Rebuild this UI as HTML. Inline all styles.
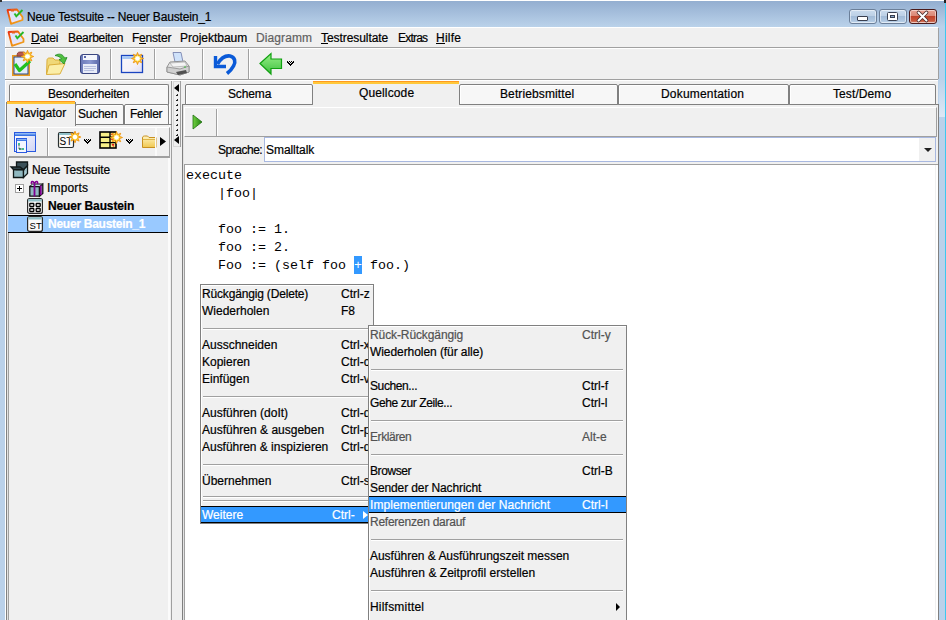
<!DOCTYPE html><html><head><meta charset="utf-8"><style>
html,body{margin:0;padding:0;}
body{width:946px;height:620px;position:relative;overflow:hidden;background:#bad1ea;font-family:'Liberation Sans',sans-serif;}
div{position:absolute;white-space:pre;box-sizing:border-box;}
svg{position:absolute;overflow:visible;}
u{text-decoration:none;border-bottom:1px solid currentColor;}
.t{-webkit-text-stroke:0.2px currentColor;}
</style></head><body>
<div style="left:0px;top:0px;width:946px;height:1px;background:#ffffff"></div>
<div style="left:0px;top:1px;width:946px;height:26px;background:linear-gradient(#93aed0,#bad2ea)"></div>
<div style="left:0px;top:27px;width:946px;height:593px;background:#bad1ea"></div>
<div style="left:939px;top:80px;width:6px;height:37px;background:linear-gradient(#bcd3ea,#dce8f5)"></div>
<div style="left:945px;top:0px;width:1px;height:620px;background:#3cc8f0"></div>
<div style="left:0px;top:0px;width:2px;height:2px;background:#333"></div>
<div style="left:944px;top:0px;width:2px;height:3px;background:#222"></div>
<div style="left:5px;top:27px;width:933px;height:593px;background:#f0f0f0;border-top:1px solid #fff;border-left:1px solid #fff"></div>
<div style="left:938px;top:28px;width:1px;height:19px;background:#a0a0a0"></div>
<div style="left:938px;top:49px;width:1px;height:30px;background:#a0a0a0"></div>
<div style="left:938px;top:104px;width:1px;height:516px;background:#a0a0a0"></div>
<div class="t" style="left:27px;top:11px;font-family:'Liberation Sans',sans-serif;font-size:12px;line-height:12px;color:#000;letter-spacing:-0.168px;">Neue Testsuite -- Neuer Baustein_1</div>
<div style="left:849px;top:9px;width:28px;height:15px;background:linear-gradient(#cbdcee 0%,#bcd0e6 45%,#a3bcd8 50%,#b0c8e2 85%,#c8dcf0 100%);border:1px solid #6b7f99;border-radius:3px;box-shadow:inset 0 0 0 1px rgba(255,255,255,0.5)"></div>
<div style="left:879px;top:9px;width:28px;height:15px;background:linear-gradient(#cbdcee 0%,#bcd0e6 45%,#a3bcd8 50%,#b0c8e2 85%,#c8dcf0 100%);border:1px solid #6b7f99;border-radius:3px;box-shadow:inset 0 0 0 1px rgba(255,255,255,0.5)"></div>
<div style="left:909px;top:9px;width:28px;height:15px;background:linear-gradient(#e8a293 0%,#d98876 45%,#c0432a 50%,#c85a3f 85%,#e0a090 100%);border:1px solid #4a1a1a;border-radius:3px;box-shadow:inset 0 0 0 1px rgba(255,255,255,0.5)"></div>
<div style="left:857px;top:16px;width:11px;height:5px;background:#fff;border:1px solid #3a4050;border-radius:1px"></div>
<svg style="left:887px;top:12px" width="11" height="9" viewBox="0 0 11 9">
<rect x="0.5" y="0.5" width="10" height="8" rx="1" fill="#fff" stroke="#3a4050"/>
<rect x="3.5" y="3.5" width="4" height="2" fill="#8aa8cc" stroke="#3a4050"/></svg>
<svg style="left:916px;top:11px" width="13" height="11" viewBox="0 0 13 11">
<path d="M2.5 1.5 L10.5 9.5 M10.5 1.5 L2.5 9.5" stroke="#4a2a2a" stroke-width="3.6" stroke-linecap="round"/>
<path d="M2.5 1.5 L10.5 9.5 M10.5 1.5 L2.5 9.5" stroke="#ffffff" stroke-width="2" stroke-linecap="round"/></svg>
<svg style="left:4px;top:6px" width="22" height="22" viewBox="0 0 22 22">
<defs><linearGradient id="ao4" x1="0" y1="0" x2="1" y2="1"><stop offset="0" stop-color="#e83010"/><stop offset="0.5" stop-color="#f08a10"/><stop offset="1" stop-color="#f0a020"/></linearGradient></defs>
<path d="M3.5 4 L13 3.5 L18.5 11 L18.5 14 L7 17.8 Z" fill="#e8e4fa" stroke="url(#ao4)" stroke-width="1.8" stroke-linejoin="round"/>
<path d="M6 6 L12 5.5 L16.5 11.5 L8 14.5 Z" fill="#dfe4fb"/>
<rect x="7" y="3" width="3" height="2.5" fill="#e86020"/>
<path d="M10.5 7.5 L12.3 10.2 L18.5 4" stroke="#28b828" stroke-width="1.9" fill="none"/></svg>
<div style="left:5px;top:47px;width:933px;height:1px;background:#a0a0a0"></div>
<div style="left:5px;top:48px;width:933px;height:1px;background:#ffffff"></div>
<svg style="left:5px;top:28px" width="22" height="22" viewBox="0 0 22 22">
<defs><linearGradient id="ao5" x1="0" y1="0" x2="1" y2="1"><stop offset="0" stop-color="#e83010"/><stop offset="0.5" stop-color="#f08a10"/><stop offset="1" stop-color="#f0a020"/></linearGradient></defs>
<path d="M3.5 4 L13 3.5 L18.5 11 L18.5 14 L7 17.8 Z" fill="#e8e4fa" stroke="url(#ao5)" stroke-width="1.8" stroke-linejoin="round"/>
<path d="M6 6 L12 5.5 L16.5 11.5 L8 14.5 Z" fill="#dfe4fb"/>
<rect x="7" y="3" width="3" height="2.5" fill="#e86020"/>
<path d="M10.5 7.5 L12.3 10.2 L18.5 4" stroke="#28b828" stroke-width="1.9" fill="none"/></svg>
<div style="left:31.0px;top:43px;width:8.5px;height:1px;background:#000"></div>
<div class="t" style="left:31px;top:32px;font-family:'Liberation Sans',sans-serif;font-size:12px;line-height:12px;color:#000;letter-spacing:-0.163px;">Datei</div>
<div class="t" style="left:68px;top:32px;font-family:'Liberation Sans',sans-serif;font-size:12px;line-height:12px;color:#000;letter-spacing:-0.285px;">Bearbeiten</div>
<div style="left:139.1px;top:43px;width:6.5px;height:1px;background:#000"></div>
<div class="t" style="left:132px;top:32px;font-family:'Liberation Sans',sans-serif;font-size:12px;line-height:12px;color:#000;letter-spacing:-0.212px;">Fenster</div>
<div class="t" style="left:180px;top:32px;font-family:'Liberation Sans',sans-serif;font-size:12px;line-height:12px;color:#000;letter-spacing:-0.015px;">Projektbaum</div>
<div class="t" style="left:256px;top:32px;font-family:'Liberation Sans',sans-serif;font-size:12px;line-height:12px;color:#606060;letter-spacing:0.107px;">Diagramm</div>
<div style="left:321.0px;top:43px;width:7.3px;height:1px;background:#000"></div>
<div class="t" style="left:321px;top:32px;font-family:'Liberation Sans',sans-serif;font-size:12px;line-height:12px;color:#000;letter-spacing:-0.064px;">Testresultate</div>
<div class="t" style="left:398px;top:32px;font-family:'Liberation Sans',sans-serif;font-size:12px;line-height:12px;color:#000;letter-spacing:-0.801px;">Extras</div>
<div style="left:436.0px;top:43px;width:8.9px;height:1px;background:#000"></div>
<div class="t" style="left:436px;top:32px;font-family:'Liberation Sans',sans-serif;font-size:12px;line-height:12px;color:#000;letter-spacing:0.238px;">Hilfe</div>
<div style="left:5px;top:79px;width:933px;height:1px;background:#a0a0a0"></div>
<div style="left:5px;top:80px;width:933px;height:1px;background:#ffffff"></div>
<div style="left:110px;top:49px;width:1px;height:30px;background:#a0a0a0"></div>
<div style="left:111px;top:49px;width:1px;height:30px;background:#ffffff"></div>
<div style="left:154px;top:49px;width:1px;height:30px;background:#a0a0a0"></div>
<div style="left:155px;top:49px;width:1px;height:30px;background:#ffffff"></div>
<div style="left:202px;top:49px;width:1px;height:30px;background:#a0a0a0"></div>
<div style="left:203px;top:49px;width:1px;height:30px;background:#ffffff"></div>
<div style="left:248px;top:49px;width:1px;height:30px;background:#a0a0a0"></div>
<div style="left:249px;top:49px;width:1px;height:30px;background:#ffffff"></div>
<svg style="left:11px;top:50px" width="26" height="28" viewBox="0 0 26 28">
<rect x="1.5" y="5.5" width="17" height="20" fill="#f4a830" stroke="#e89820" stroke-width="1"/>
<rect x="3" y="7" width="14" height="17" fill="#e2ecfa" stroke="#2a4a8a" stroke-width="1"/>
<path d="M6 6 C6 3 7 2 9 2 L12 2 C14 2 15 3 15 6 Z" fill="#b85a50" stroke="#803830" stroke-width="0.8"/>
<path d="M4 14 L8.5 20.5 L19 11" stroke="#20c020" stroke-width="3.2" fill="none" stroke-linejoin="round"/>
<path d="M16.50 0.30 L17.69 3.64 L20.88 2.12 L19.36 5.31 L22.70 6.50 L19.36 7.69 L20.88 10.88 L17.69 9.36 L16.50 12.70 L15.31 9.36 L12.12 10.88 L13.64 7.69 L10.30 6.50 L13.64 5.31 L12.12 2.12 L15.31 3.64 Z" fill="#ffe040" stroke="#f09818" stroke-width="1"/><circle cx="16.5" cy="6.5" r="2.36" fill="#ffffff"/></svg>
<svg style="left:45px;top:52px" width="24" height="24" viewBox="0 0 24 24">
<path d="M2 8 C2 7 3 6 4 6 L8 6 L10 8 L15 8 L15 20 L1.5 22 Z" fill="#f0d878" stroke="#d8a830" stroke-width="0.9"/>
<path d="M4 13 L20 11.5 L15 22 L1.5 22.5 Z" fill="#fbeea8" stroke="#d8a830" stroke-width="0.9"/>
<path d="M10 3.5 C14 1 18 2 19.5 6 L22 5.5 L19 12 L14 7.5 L16.5 7 C15.5 5 13 4 10 3.5 Z" fill="#50c040" stroke="#208a20" stroke-width="0.8"/></svg>
<svg style="left:80px;top:54px" width="20" height="20" viewBox="0 0 20 20">
<defs><linearGradient id="fl" x1="0" x2="1"><stop offset="0" stop-color="#6a78b8"/><stop offset="0.5" stop-color="#8a98d0"/><stop offset="1" stop-color="#5a68a8"/></linearGradient></defs>
<rect x="0.5" y="0.5" width="19" height="19" rx="2.5" fill="url(#fl)" stroke="#3a4680"/>
<rect x="3" y="1" width="14" height="5" fill="#f4f6fc"/>
<rect x="4" y="2" width="2" height="2" fill="#5a68a8"/>
<rect x="3" y="10" width="14" height="9" fill="#e8ecf8"/>
<path d="M4 12.5 H16 M4 14.5 H16 M4 16.5 H14" stroke="#a8b4d8" stroke-width="0.8"/></svg>
<svg style="left:120px;top:52px" width="25" height="23" viewBox="0 0 25 23">
<defs><linearGradient id="wb" x1="0" y1="0" x2="1" y2="1"><stop offset="0" stop-color="#fcf8f8"/><stop offset="0.6" stop-color="#f4f0f8"/><stop offset="1" stop-color="#dcdcf4"/></linearGradient></defs>
<rect x="1.5" y="3.5" width="21" height="17" fill="url(#wb)" stroke="#1a44c0" stroke-width="1.3"/>
<rect x="2" y="4" width="20" height="3" fill="#a8c8f4"/>
<path d="M17.50 0.50 L18.65 3.73 L21.74 2.26 L20.27 5.35 L23.50 6.50 L20.27 7.65 L21.74 10.74 L18.65 9.27 L17.50 12.50 L16.35 9.27 L13.26 10.74 L14.73 7.65 L11.50 6.50 L14.73 5.35 L13.26 2.26 L16.35 3.73 Z" fill="#ffe040" stroke="#f09818" stroke-width="1"/><circle cx="17.5" cy="6.5" r="2.28" fill="#ffffff"/></svg>
<svg style="left:165px;top:51px" width="26" height="27" viewBox="0 0 26 27">
<path d="M8 1.5 L16 1.5 L18 11 L10 11 Z" fill="#cfe2fa" stroke="#7a86b0" stroke-width="0.9"/>
<path d="M2 16 L5 11 L20 10 L24 15 L24 21 L15 24 L2 21 Z" fill="#e4e4e4" stroke="#8a8a8a" stroke-width="0.9"/>
<path d="M5 12 L20 11 L22 15 L8 16 Z" fill="#f4f4f4" stroke="#a0a0a0" stroke-width="0.6"/>
<path d="M2 16 L15 18 L24 15 L24 21 L15 24 L2 21 Z" fill="#d0d0d0" stroke="#8a8a8a" stroke-width="0.8"/>
<path d="M11 21 L21 19 L22 22 L13 24 Z" fill="#505050"/>
<rect x="19" y="15.5" width="2" height="1" fill="#40c040"/></svg>
<svg style="left:212px;top:52px" width="26" height="24" viewBox="0 0 26 24">
<path d="M5.5 12 C9 6 14 3.5 18 4 C23 5 24 10 21.5 14 C20 17 17.5 19.5 15 21.5" stroke="#0a5ad8" stroke-width="3.6" fill="none" stroke-linecap="butt"/>
<path d="M3.5 4 L3.5 14.5 L14 14.5" stroke="#0a5ad8" stroke-width="3.4" fill="none" stroke-linejoin="miter"/></svg>
<svg style="left:259px;top:52px" width="26" height="24" viewBox="0 0 26 24">
<defs><linearGradient id="ga" x1="0" y1="0" x2="0" y2="1"><stop offset="0" stop-color="#98f088"/><stop offset="1" stop-color="#40c040"/></linearGradient></defs>
<path d="M1 11.5 L12 1.5 L12 7 L22.5 7 L22.5 16.5 L12 16.5 L12 22 Z" fill="url(#ga)" stroke="#10a010" stroke-width="1.2"/></svg>
<svg style="left:287px;top:61px" width="7" height="5" viewBox="0 0 7 5" shape-rendering="crispEdges">
<path d="M0 0h1v1h-1z M2 0h1v1h-1z M4 0h1v1h-1z M6 0h1v1h-1z M0 1h1v1h-1z M1 1h1v1h-1z M3 1h1v1h-1z M5 1h1v1h-1z M6 1h1v1h-1z M1 2h1v1h-1z M2 2h1v1h-1z M4 2h1v1h-1z M5 2h1v1h-1z M2 3h1v1h-1z M3 3h1v1h-1z M4 3h1v1h-1z M3 4h1v1h-1z" fill="#000"/></svg>
<div style="left:6px;top:104px;width:1px;height:516px;background:#808080"></div>
<div style="left:7px;top:104px;width:1px;height:516px;background:#e3e3e3"></div>
<div style="left:169px;top:104px;width:1px;height:516px;background:#ffffff"></div>
<div style="left:171px;top:81px;width:1px;height:539px;background:#a0a0a0"></div>
<div style="left:9px;top:84px;width:160px;height:21px;background:#f7f7f7;border:1px solid #808080;border-bottom:none;border-radius:2px 2px 0 0;box-shadow:inset 1px 1px 0 #fff"></div>
<div class="t" style="left:48px;top:88px;font-family:'Liberation Sans',sans-serif;font-size:12px;line-height:12px;color:#000;letter-spacing:-0.205px;">Besonderheiten</div>
<div style="left:75px;top:104px;width:49px;height:21px;background:#f7f7f7;border:1px solid #808080;border-radius:2px 2px 0 0;box-shadow:inset 1px 1px 0 #fff"></div>
<div style="left:124px;top:104px;width:45px;height:21px;background:#f7f7f7;border:1px solid #808080;border-radius:2px 2px 0 0;box-shadow:inset 1px 1px 0 #fff"></div>
<div style="left:75px;top:124px;width:97px;height:1px;background:#808080"></div>
<div style="left:6px;top:102px;width:70px;height:24px;background:#f0f0f0;border-left:1px solid #808080;border-right:1px solid #808080"></div>
<div style="left:7px;top:101px;width:68px;height:1px;background:#ff9a20"></div>
<div style="left:7px;top:102px;width:68px;height:2px;background:#ffc83a"></div>
<div class="t" style="left:15px;top:107px;font-family:'Liberation Sans',sans-serif;font-size:12px;line-height:12px;color:#000;letter-spacing:-0.018px;">Navigator</div>
<div class="t" style="left:78px;top:108px;font-family:'Liberation Sans',sans-serif;font-size:12px;line-height:12px;color:#000;letter-spacing:-0.250px;">Suchen</div>
<div class="t" style="left:130px;top:108px;font-family:'Liberation Sans',sans-serif;font-size:12px;line-height:12px;color:#000;letter-spacing:-0.303px;">Fehler</div>
<div style="left:8px;top:127px;width:162px;height:30px;background:#f0f0f0;border-top:1px solid #fff;border-left:1px solid #fff;border-right:1px solid #a0a0a0;border-bottom:1px solid #a0a0a0"></div>
<div style="left:47px;top:128px;width:1px;height:28px;background:#a0a0a0"></div>
<div style="left:48px;top:128px;width:1px;height:28px;background:#ffffff"></div>
<div style="left:156px;top:128px;width:1px;height:28px;background:#fafafa"></div>
<svg style="left:14px;top:132px" width="23" height="23" viewBox="0 0 23 23">
<defs><linearGradient id="wt" x1="0" y1="0" x2="0" y2="1"><stop offset="0" stop-color="#a8ccf8"/><stop offset="1" stop-color="#2060e0"/></linearGradient>
<linearGradient id="wbd" x1="0" y1="0" x2="1" y2="1"><stop offset="0" stop-color="#ffffff"/><stop offset="1" stop-color="#d0d4f4"/></linearGradient></defs>
<rect x="0.5" y="0.5" width="21" height="19" fill="url(#wbd)" stroke="#2a5ae0"/>
<rect x="1" y="1" width="20.5" height="3" fill="url(#wt)"/>
<rect x="2.5" y="6.5" width="10" height="14" fill="#f4f6ff" stroke="#2a5ae0"/>
<rect x="3" y="7" width="9.5" height="2" fill="url(#wt)"/>
<rect x="4" y="11" width="2" height="2" fill="#40c090"/><rect x="8" y="16" width="2" height="2" fill="#40c090"/><rect x="5" y="16" width="2" height="2" fill="#40c090"/>
<path d="M5 13 V17 M5.5 17 H8" stroke="#202020" stroke-width="0.8" stroke-dasharray="1 0.6" fill="none"/></svg>
<svg style="left:57px;top:131px" width="24" height="19" viewBox="0 0 24 19">
<rect x="1.5" y="1.5" width="15" height="15" rx="1.5" fill="#fafafa" stroke="#283030" stroke-width="1.2"/>
<rect x="2" y="2" width="14" height="2" fill="#90c0c8"/>
<text x="2.6" y="13.6" font-family="Liberation Sans" font-size="10" fill="#000">ST</text>
<path d="M18.00 0.20 L19.11 3.32 L22.10 1.90 L20.68 4.89 L23.80 6.00 L20.68 7.11 L22.10 10.10 L19.11 8.68 L18.00 11.80 L16.89 8.68 L13.90 10.10 L15.32 7.11 L12.20 6.00 L15.32 4.89 L13.90 1.90 L16.89 3.32 Z" fill="#ffe040" stroke="#f09818" stroke-width="1"/><circle cx="18" cy="6" r="2.20" fill="#ffffff"/></svg>
<svg style="left:84px;top:139px" width="7" height="5" viewBox="0 0 7 5" shape-rendering="crispEdges">
<path d="M0 0h1v1h-1z M2 0h1v1h-1z M4 0h1v1h-1z M6 0h1v1h-1z M0 1h1v1h-1z M1 1h1v1h-1z M3 1h1v1h-1z M5 1h1v1h-1z M6 1h1v1h-1z M1 2h1v1h-1z M2 2h1v1h-1z M4 2h1v1h-1z M5 2h1v1h-1z M2 3h1v1h-1z M3 3h1v1h-1z M4 3h1v1h-1z M3 4h1v1h-1z" fill="#000"/></svg>
<svg style="left:99px;top:131px" width="25" height="18" viewBox="0 0 25 18">
<rect x="1" y="1" width="16" height="16" fill="#f8f088" stroke="#000" stroke-width="1.6"/>
<path d="M1 6.3 H17 M1 11.6 H17 M11 1 V17" stroke="#000" stroke-width="1.4"/>
<path d="M13 13 L15 15.5 M13.5 15 L15 13" stroke="#e01010" stroke-width="1.2"/>
<path d="M12 3 L14 4 M12 8 L14 9" stroke="#e01010" stroke-width="1"/>
<path d="M17.50 0.50 L18.65 3.73 L21.74 2.26 L20.27 5.35 L23.50 6.50 L20.27 7.65 L21.74 10.74 L18.65 9.27 L17.50 12.50 L16.35 9.27 L13.26 10.74 L14.73 7.65 L11.50 6.50 L14.73 5.35 L13.26 2.26 L16.35 3.73 Z" fill="#ffe040" stroke="#f09818" stroke-width="1"/><circle cx="17.5" cy="6.5" r="2.28" fill="#ffffff"/></svg>
<svg style="left:126px;top:139px" width="7" height="5" viewBox="0 0 7 5" shape-rendering="crispEdges">
<path d="M0 0h1v1h-1z M2 0h1v1h-1z M4 0h1v1h-1z M6 0h1v1h-1z M0 1h1v1h-1z M1 1h1v1h-1z M3 1h1v1h-1z M5 1h1v1h-1z M6 1h1v1h-1z M1 2h1v1h-1z M2 2h1v1h-1z M4 2h1v1h-1z M5 2h1v1h-1z M2 3h1v1h-1z M3 3h1v1h-1z M4 3h1v1h-1z M3 4h1v1h-1z" fill="#000"/></svg>
<svg style="left:142px;top:135px" width="14" height="14" viewBox="0 0 14 14">
<defs><linearGradient id="fo" x1="0" y1="0" x2="0" y2="1"><stop offset="0" stop-color="#fff4c0"/><stop offset="1" stop-color="#f0c850"/></linearGradient></defs>
<path d="M0.5 3 C0.5 1.5 1.5 1 2.5 1 L5.5 1 L7 2.5 L14 2.5 L14 12.5 L0.5 12.5 Z" fill="url(#fo)" stroke="#c89020"/>
<path d="M0.5 4.5 H14" stroke="#d8a830" stroke-width="0.8"/>
<path d="M13 0 L14 1 M13 4 L14 5" stroke="#f09010" stroke-width="1"/></svg>
<div style="left:155px;top:128px;width:1px;height:28px;background:#fafafa"></div>
<svg style="left:160px;top:137px" width="6" height="9" viewBox="0 0 6 9"><path d="M0 0 L6 4.5 L0 9 Z" fill="#000"/></svg>
<div style="left:8px;top:157px;width:162px;height:463px;background:#f0f0f0;border-left:1px solid #a0a0a0;border-top:1px solid #a0a0a0"></div>
<div style="left:168px;top:158px;width:2px;height:462px;background:#fbfbfb"></div>
<svg style="left:10px;top:161px" width="19" height="18" viewBox="0 0 19 18">
<path d="M3.5 8.5 H13.5 V16.5 H3.5 Z" fill="#90b8c0" stroke="#101818" stroke-width="1.3"/>
<path d="M13.5 8.5 L17.5 4.5 V12.5 L13.5 16.5 Z" fill="#a8ccd4" stroke="#101818" stroke-width="1.3"/>
<path d="M6.5 1 H17.5 V4.5 L13.5 8.5 H6.5 Z" fill="#3a5058" stroke="#101818" stroke-width="1.3"/>
<path d="M1 6 H10 L13.5 8.5 H3.5 Z" fill="#3a5058" stroke="#101818" stroke-width="1.3"/></svg>
<div class="t" style="left:32px;top:164px;font-family:'Liberation Sans',sans-serif;font-size:12px;line-height:12px;color:#000;letter-spacing:-0.069px;">Neue Testsuite</div>
<div style="left:15px;top:184px;width:9px;height:9px;background:#fff;border:1px solid #a0a0a0"></div>
<div style="left:17px;top:188px;width:5px;height:1px;background:#000"></div>
<div style="left:19px;top:186px;width:1px;height:5px;background:#000"></div>
<svg style="left:29px;top:180px" width="15" height="17" viewBox="0 0 15 17">
<path d="M0.8 6.5 H10.5 V16.2 H0.8 Z" fill="#90b8c0" stroke="#101010" stroke-width="1.3"/>
<path d="M10.5 6.5 L13.8 4 V13.5 L10.5 16.2 Z" fill="#a8ccd4" stroke="#101010" stroke-width="1.3"/>
<path d="M0.8 6.5 L3.5 4 H13.8 L10.5 6.5 Z" fill="#c0dce4" stroke="#101010" stroke-width="1"/>
<path d="M5.5 4 V16.5 M11.8 5.5 V15" stroke="#800090" stroke-width="1.8"/>
<path d="M2.5 4 C2 1 4 0.5 5.5 3.5 C7 0.5 9 1 8.5 4" stroke="#800090" stroke-width="1.6" fill="none"/></svg>
<div class="t" style="left:47px;top:182px;font-family:'Liberation Sans',sans-serif;font-size:12px;line-height:12px;color:#000;letter-spacing:0.170px;">Imports</div>
<svg style="left:27px;top:198px" width="16" height="16" viewBox="0 0 16 16">
<rect x="0.6" y="0.6" width="14.8" height="14.8" rx="2" fill="#fafafa" stroke="#282828" stroke-width="1.2"/>
<rect x="1.2" y="1.2" width="13.6" height="2.3" fill="#90c0c8"/>
<rect x="2.8" y="5.5" width="4" height="3" rx="0.5" fill="#fff" stroke="#000" stroke-width="1.3"/><rect x="9.2" y="5.5" width="4" height="3" rx="0.5" fill="#fff" stroke="#000" stroke-width="1.3"/>
<rect x="2.8" y="10.5" width="4" height="3" rx="0.5" fill="#fff" stroke="#000" stroke-width="1.3"/><rect x="9.2" y="10.5" width="4" height="3" rx="0.5" fill="#fff" stroke="#000" stroke-width="1.3"/></svg>
<div class="t" style="left:48px;top:200px;font-family:'Liberation Sans',sans-serif;font-size:12px;line-height:12px;font-weight:bold;color:#000;letter-spacing:-0.131px;">Neuer Baustein</div>
<div style="left:8px;top:215px;width:160px;height:18px;background:#99c9ff;border-top:1px solid #000;border-bottom:1px solid #000"></div>
<svg style="left:27px;top:216px" width="16" height="16" viewBox="0 0 16 16">
<rect x="0.6" y="0.6" width="14.8" height="14.8" rx="2" fill="#fafafa" stroke="#282828" stroke-width="1.2"/>
<rect x="1.2" y="1.2" width="13.6" height="2.3" fill="#90c0c8"/>
<text x="2.6" y="13.4" font-family="Liberation Sans" font-size="9.5" fill="#000">ST</text></svg>
<div class="t" style="left:48px;top:218px;font-family:'Liberation Sans',sans-serif;font-size:12px;line-height:12px;font-weight:bold;color:#ffffff;letter-spacing:-0.261px;">Neuer Baustein_1</div>
<div style="left:173px;top:81px;width:8px;height:66px;background:#f0f0f0;border:1px solid #d8d8d8"></div>
<svg style="left:174px;top:84px" width="5" height="8" viewBox="0 0 5 8"><path d="M5 0 L0 4 L5 8 Z" fill="#000"/></svg>
<svg style="left:174px;top:136px" width="5" height="8" viewBox="0 0 5 8"><path d="M5 0 L0 4 L5 8 Z" fill="#000"/></svg>
<div style="left:177px;top:94px;width:1px;height:1px;background:#333"></div>
<div style="left:176px;top:95px;width:2px;height:1px;background:#222"></div>
<div style="left:177px;top:99px;width:1px;height:1px;background:#333"></div>
<div style="left:176px;top:100px;width:2px;height:1px;background:#222"></div>
<div style="left:177px;top:104px;width:1px;height:1px;background:#333"></div>
<div style="left:176px;top:105px;width:2px;height:1px;background:#222"></div>
<div style="left:177px;top:109px;width:1px;height:1px;background:#333"></div>
<div style="left:176px;top:110px;width:2px;height:1px;background:#222"></div>
<div style="left:177px;top:114px;width:1px;height:1px;background:#333"></div>
<div style="left:176px;top:115px;width:2px;height:1px;background:#222"></div>
<div style="left:177px;top:119px;width:1px;height:1px;background:#333"></div>
<div style="left:176px;top:120px;width:2px;height:1px;background:#222"></div>
<div style="left:177px;top:124px;width:1px;height:1px;background:#333"></div>
<div style="left:176px;top:125px;width:2px;height:1px;background:#222"></div>
<div style="left:177px;top:129px;width:1px;height:1px;background:#333"></div>
<div style="left:176px;top:130px;width:2px;height:1px;background:#222"></div>
<div style="left:177px;top:134px;width:1px;height:1px;background:#333"></div>
<div style="left:176px;top:135px;width:2px;height:1px;background:#222"></div>
<div style="left:180px;top:81px;width:1px;height:66px;background:#a0a0a0"></div>
<div style="left:182px;top:104px;width:1px;height:516px;background:#808080"></div>
<div style="left:182px;top:104px;width:757px;height:1px;background:#808080"></div>
<div style="left:183px;top:105px;width:1px;height:515px;background:#e3e3e3"></div>
<div style="left:938px;top:104px;width:1px;height:516px;background:#808080"></div>
<div style="left:185px;top:84px;width:128px;height:21px;background:#f7f7f7;border:1px solid #808080;border-radius:2px 2px 0 0;box-shadow:inset 1px 1px 0 #fff"></div>
<div class="t" style="left:228px;top:88px;font-family:'Liberation Sans',sans-serif;font-size:12px;line-height:12px;color:#000;letter-spacing:-0.137px;">Schema</div>
<div style="left:459px;top:84px;width:159px;height:21px;background:#f7f7f7;border:1px solid #808080;border-radius:2px 2px 0 0;box-shadow:inset 1px 1px 0 #fff"></div>
<div class="t" style="left:500px;top:88px;font-family:'Liberation Sans',sans-serif;font-size:12px;line-height:12px;color:#000;letter-spacing:0.107px;">Betriebsmittel</div>
<div style="left:618px;top:84px;width:171px;height:21px;background:#f7f7f7;border:1px solid #808080;border-radius:2px 2px 0 0;box-shadow:inset 1px 1px 0 #fff"></div>
<div class="t" style="left:661px;top:88px;font-family:'Liberation Sans',sans-serif;font-size:12px;line-height:12px;color:#000;letter-spacing:0.191px;">Dokumentation</div>
<div style="left:789px;top:84px;width:147px;height:21px;background:#f7f7f7;border:1px solid #808080;border-radius:2px 2px 0 0;box-shadow:inset 1px 1px 0 #fff"></div>
<div class="t" style="left:833px;top:88px;font-family:'Liberation Sans',sans-serif;font-size:12px;line-height:12px;color:#000;letter-spacing:0.094px;">Test/Demo</div>
<div style="left:313px;top:81px;width:146px;height:26px;background:#f0f0f0"></div>
<div style="left:313px;top:81px;width:146px;height:1px;background:#ff9a20"></div>
<div style="left:313px;top:82px;width:146px;height:2px;background:#ffc83a"></div>
<div class="t" style="left:359px;top:87px;font-family:'Liberation Sans',sans-serif;font-size:12px;line-height:12px;color:#000;letter-spacing:0.129px;">Quellcode</div>
<div style="left:184px;top:107px;width:1px;height:1px;"></div>
<div style="left:184px;top:107px;width:753px;height:30px;background:#f0f0f0;border-left:1px solid #fff;border-top:1px solid #fff;border-bottom:1px solid #a0a0a0;border-right:1px solid #a0a0a0"></div>
<div style="left:216px;top:109px;width:1px;height:27px;background:#a0a0a0"></div>
<div style="left:217px;top:109px;width:1px;height:27px;background:#fff"></div>
<svg style="left:192px;top:114px" width="11" height="16" viewBox="0 0 11 16">
<defs><linearGradient id="pg" x1="0" x2="1"><stop offset="0" stop-color="#70d040"/><stop offset="1" stop-color="#208010"/></linearGradient></defs>
<path d="M1 1 L10 8 L1 15 Z" fill="url(#pg)" stroke="#207010" stroke-width="0.8"/></svg>
<div class="t" style="left:218px;top:144px;font-family:'Liberation Sans',sans-serif;font-size:12px;line-height:12px;color:#000;letter-spacing:-0.479px;">Sprache:</div>
<div style="left:264px;top:137px;width:672px;height:25px;background:#fff;border:1px solid #a8b8e0"></div>
<div style="left:919px;top:138px;width:16px;height:23px;background:#f0f0f0"></div>
<svg style="left:924px;top:148px" width="8" height="4" viewBox="0 0 8 4"><path d="M0 0 L8 0 L4 4 Z" fill="#202020"/></svg>
<div class="t" style="left:266px;top:144px;font-family:'Liberation Sans',sans-serif;font-size:12px;line-height:12px;color:#000;letter-spacing:-0.054px;">Smalltalk</div>
<div style="left:184px;top:164px;width:754px;height:456px;background:#fff;border-left:1px solid #a0a0a0;border-top:1px solid #a0a0a0"></div>
<div style="left:935px;top:165px;width:1px;height:455px;background:#f0f0f0"></div>
<div style="left:936px;top:165px;width:2px;height:455px;background:#fff"></div>
<div style="left:186px;top:167px;font-family:'Liberation Mono',monospace;font-size:13.33px;line-height:18px;color:#000">execute</div>
<div style="left:186px;top:185px;font-family:'Liberation Mono',monospace;font-size:13.33px;line-height:18px;color:#000">    |foo|</div>
<div style="left:186px;top:221px;font-family:'Liberation Mono',monospace;font-size:13.33px;line-height:18px;color:#000">    foo := 1.</div>
<div style="left:186px;top:239px;font-family:'Liberation Mono',monospace;font-size:13.33px;line-height:18px;color:#000">    foo := 2.</div>
<div style="left:186px;top:257px;font-family:'Liberation Mono',monospace;font-size:13.33px;line-height:18px;color:#000">    Foo := (self foo + foo.)</div>
<div style="left:354px;top:256px;width:8px;height:18px;background:#3399ff"></div>
<div style="left:354px;top:257px;font-family:'Liberation Mono',monospace;font-size:13.33px;line-height:18px;color:#fff;width:8px;overflow:hidden">+</div>
<div style="left:200px;top:284px;width:174px;height:240px;background:#f0f0f0;border:1px solid #808080;box-shadow:inset 1px 1px 0 #fff"></div>
<div class="t" style="left:202px;top:288px;font-family:'Liberation Sans',sans-serif;font-size:12px;line-height:12px;color:#000;letter-spacing:-0.168px;">Rückgängig (Delete)</div>
<div class="t" style="left:341px;top:288px;font-family:'Liberation Sans',sans-serif;font-size:12px;line-height:12px;color:#000;letter-spacing:0.000px;">Ctrl-z</div>
<div class="t" style="left:202px;top:305px;font-family:'Liberation Sans',sans-serif;font-size:12px;line-height:12px;color:#000;letter-spacing:0.000px;">Wiederholen</div>
<div class="t" style="left:341px;top:305px;font-family:'Liberation Sans',sans-serif;font-size:12px;line-height:12px;color:#000;letter-spacing:0.000px;">F8</div>
<div style="left:203px;top:328px;width:166px;height:1px;background:#a0a0a0"></div>
<div style="left:203px;top:329px;width:166px;height:1px;background:#fff"></div>
<div class="t" style="left:202px;top:339px;font-family:'Liberation Sans',sans-serif;font-size:12px;line-height:12px;color:#000;letter-spacing:0.000px;">Ausschneiden</div>
<div class="t" style="left:341px;top:339px;font-family:'Liberation Sans',sans-serif;font-size:12px;line-height:12px;color:#000;letter-spacing:0.000px;">Ctrl-x</div>
<div class="t" style="left:202px;top:356px;font-family:'Liberation Sans',sans-serif;font-size:12px;line-height:12px;color:#000;letter-spacing:0.000px;">Kopieren</div>
<div class="t" style="left:341px;top:356px;font-family:'Liberation Sans',sans-serif;font-size:12px;line-height:12px;color:#000;letter-spacing:0.000px;">Ctrl-c</div>
<div class="t" style="left:202px;top:373px;font-family:'Liberation Sans',sans-serif;font-size:12px;line-height:12px;color:#000;letter-spacing:0.000px;">Einfügen</div>
<div class="t" style="left:341px;top:373px;font-family:'Liberation Sans',sans-serif;font-size:12px;line-height:12px;color:#000;letter-spacing:0.000px;">Ctrl-v</div>
<div style="left:203px;top:396px;width:166px;height:1px;background:#a0a0a0"></div>
<div style="left:203px;top:397px;width:166px;height:1px;background:#fff"></div>
<div class="t" style="left:202px;top:407px;font-family:'Liberation Sans',sans-serif;font-size:12px;line-height:12px;color:#000;letter-spacing:0.000px;">Ausführen (doIt)</div>
<div class="t" style="left:341px;top:407px;font-family:'Liberation Sans',sans-serif;font-size:12px;line-height:12px;color:#000;letter-spacing:0.000px;">Ctrl-d</div>
<div class="t" style="left:202px;top:424px;font-family:'Liberation Sans',sans-serif;font-size:12px;line-height:12px;color:#000;letter-spacing:0.000px;">Ausführen &amp; ausgeben</div>
<div class="t" style="left:341px;top:424px;font-family:'Liberation Sans',sans-serif;font-size:12px;line-height:12px;color:#000;letter-spacing:0.000px;">Ctrl-p</div>
<div class="t" style="left:202px;top:441px;font-family:'Liberation Sans',sans-serif;font-size:12px;line-height:12px;color:#000;letter-spacing:-0.024px;">Ausführen &amp; inspizieren</div>
<div class="t" style="left:341px;top:441px;font-family:'Liberation Sans',sans-serif;font-size:12px;line-height:12px;color:#000;letter-spacing:0.000px;">Ctrl-q</div>
<div style="left:203px;top:464px;width:166px;height:1px;background:#a0a0a0"></div>
<div style="left:203px;top:465px;width:166px;height:1px;background:#fff"></div>
<div class="t" style="left:202px;top:475px;font-family:'Liberation Sans',sans-serif;font-size:12px;line-height:12px;color:#000;letter-spacing:0.000px;">Übernehmen</div>
<div class="t" style="left:341px;top:475px;font-family:'Liberation Sans',sans-serif;font-size:12px;line-height:12px;color:#000;letter-spacing:0.000px;">Ctrl-s</div>
<div style="left:203px;top:496px;width:166px;height:1px;background:#a0a0a0"></div>
<div style="left:203px;top:497px;width:166px;height:1px;background:#fff"></div>
<div style="left:203px;top:500px;width:166px;height:1px;background:#a0a0a0"></div>
<div style="left:203px;top:501px;width:166px;height:1px;background:#fff"></div>
<div style="left:201px;top:506px;width:172px;height:17px;background:#3399ff;border-top:1px solid #000;border-bottom:1px solid #000"></div>
<div class="t" style="left:202px;top:509px;font-family:'Liberation Sans',sans-serif;font-size:12px;line-height:12px;color:#fff;letter-spacing:0.000px;">Weitere</div>
<div class="t" style="left:332px;top:509px;font-family:'Liberation Sans',sans-serif;font-size:12px;line-height:12px;color:#fff;letter-spacing:0.000px;">Ctrl-</div>
<svg style="left:363px;top:511px" width="5" height="8" viewBox="0 0 5 8"><path d="M0 0 L5 4 L0 8 Z" fill="#fff"/></svg>
<div style="left:368px;top:325px;width:259px;height:300px;background:#f0f0f0;border:1px solid #808080;box-shadow:inset 1px 1px 0 #fff"></div>
<div class="t" style="left:370px;top:329px;font-family:'Liberation Sans',sans-serif;font-size:12px;line-height:12px;color:#525252;letter-spacing:-0.101px;">Rück-Rückgängig</div>
<div class="t" style="left:582px;top:329px;font-family:'Liberation Sans',sans-serif;font-size:12px;line-height:12px;color:#525252;letter-spacing:0.000px;">Ctrl-y</div>
<div class="t" style="left:370px;top:346px;font-family:'Liberation Sans',sans-serif;font-size:12px;line-height:12px;color:#000;letter-spacing:-0.069px;">Wiederholen (für alle)</div>
<div style="left:371px;top:369px;width:252px;height:1px;background:#a0a0a0"></div>
<div style="left:371px;top:370px;width:252px;height:1px;background:#fff"></div>
<div class="t" style="left:370px;top:380px;font-family:'Liberation Sans',sans-serif;font-size:12px;line-height:12px;color:#000;letter-spacing:-0.389px;">Suchen...</div>
<div class="t" style="left:582px;top:380px;font-family:'Liberation Sans',sans-serif;font-size:12px;line-height:12px;color:#000;letter-spacing:0.000px;">Ctrl-f</div>
<div class="t" style="left:370px;top:397px;font-family:'Liberation Sans',sans-serif;font-size:12px;line-height:12px;color:#000;letter-spacing:-0.383px;">Gehe zur Zeile...</div>
<div class="t" style="left:582px;top:397px;font-family:'Liberation Sans',sans-serif;font-size:12px;line-height:12px;color:#000;letter-spacing:0.000px;">Ctrl-l</div>
<div style="left:371px;top:420px;width:252px;height:1px;background:#a0a0a0"></div>
<div style="left:371px;top:421px;width:252px;height:1px;background:#fff"></div>
<div class="t" style="left:370px;top:431px;font-family:'Liberation Sans',sans-serif;font-size:12px;line-height:12px;color:#525252;letter-spacing:-0.436px;">Erklären</div>
<div class="t" style="left:582px;top:431px;font-family:'Liberation Sans',sans-serif;font-size:12px;line-height:12px;color:#525252;letter-spacing:0.000px;">Alt-e</div>
<div style="left:371px;top:454px;width:252px;height:1px;background:#a0a0a0"></div>
<div style="left:371px;top:455px;width:252px;height:1px;background:#fff"></div>
<div class="t" style="left:370px;top:465px;font-family:'Liberation Sans',sans-serif;font-size:12px;line-height:12px;color:#000;letter-spacing:-0.402px;">Browser</div>
<div class="t" style="left:582px;top:465px;font-family:'Liberation Sans',sans-serif;font-size:12px;line-height:12px;color:#000;letter-spacing:0.000px;">Ctrl-B</div>
<div class="t" style="left:370px;top:482px;font-family:'Liberation Sans',sans-serif;font-size:12px;line-height:12px;color:#000;letter-spacing:-0.110px;">Sender der Nachricht</div>
<div style="left:369px;top:496px;width:257px;height:17px;background:#3399ff;border-top:1px solid #000;border-bottom:1px solid #000"></div>
<div class="t" style="left:370px;top:499px;font-family:'Liberation Sans',sans-serif;font-size:12px;line-height:12px;color:#fff;letter-spacing:0.089px;">Implementierungen der Nachricht</div>
<div class="t" style="left:582px;top:499px;font-family:'Liberation Sans',sans-serif;font-size:12px;line-height:12px;color:#fff;letter-spacing:0.000px;">Ctrl-I</div>
<div class="t" style="left:370px;top:516px;font-family:'Liberation Sans',sans-serif;font-size:12px;line-height:12px;color:#525252;letter-spacing:-0.247px;">Referenzen darauf</div>
<div style="left:371px;top:539px;width:252px;height:1px;background:#a0a0a0"></div>
<div style="left:371px;top:540px;width:252px;height:1px;background:#fff"></div>
<div class="t" style="left:370px;top:550px;font-family:'Liberation Sans',sans-serif;font-size:12px;line-height:12px;color:#000;letter-spacing:-0.027px;">Ausführen &amp; Ausführungszeit messen</div>
<div class="t" style="left:370px;top:567px;font-family:'Liberation Sans',sans-serif;font-size:12px;line-height:12px;color:#000;letter-spacing:0.035px;">Ausführen &amp; Zeitprofil erstellen</div>
<div style="left:371px;top:590px;width:252px;height:1px;background:#a0a0a0"></div>
<div style="left:371px;top:591px;width:252px;height:1px;background:#fff"></div>
<div class="t" style="left:370px;top:601px;font-family:'Liberation Sans',sans-serif;font-size:12px;line-height:12px;color:#000;letter-spacing:0.200px;">Hilfsmittel</div>
<svg style="left:616px;top:603px" width="4" height="8" viewBox="0 0 4 8"><path d="M0 0 L4 4 L0 8 Z" fill="#000"/></svg>
</body></html>
